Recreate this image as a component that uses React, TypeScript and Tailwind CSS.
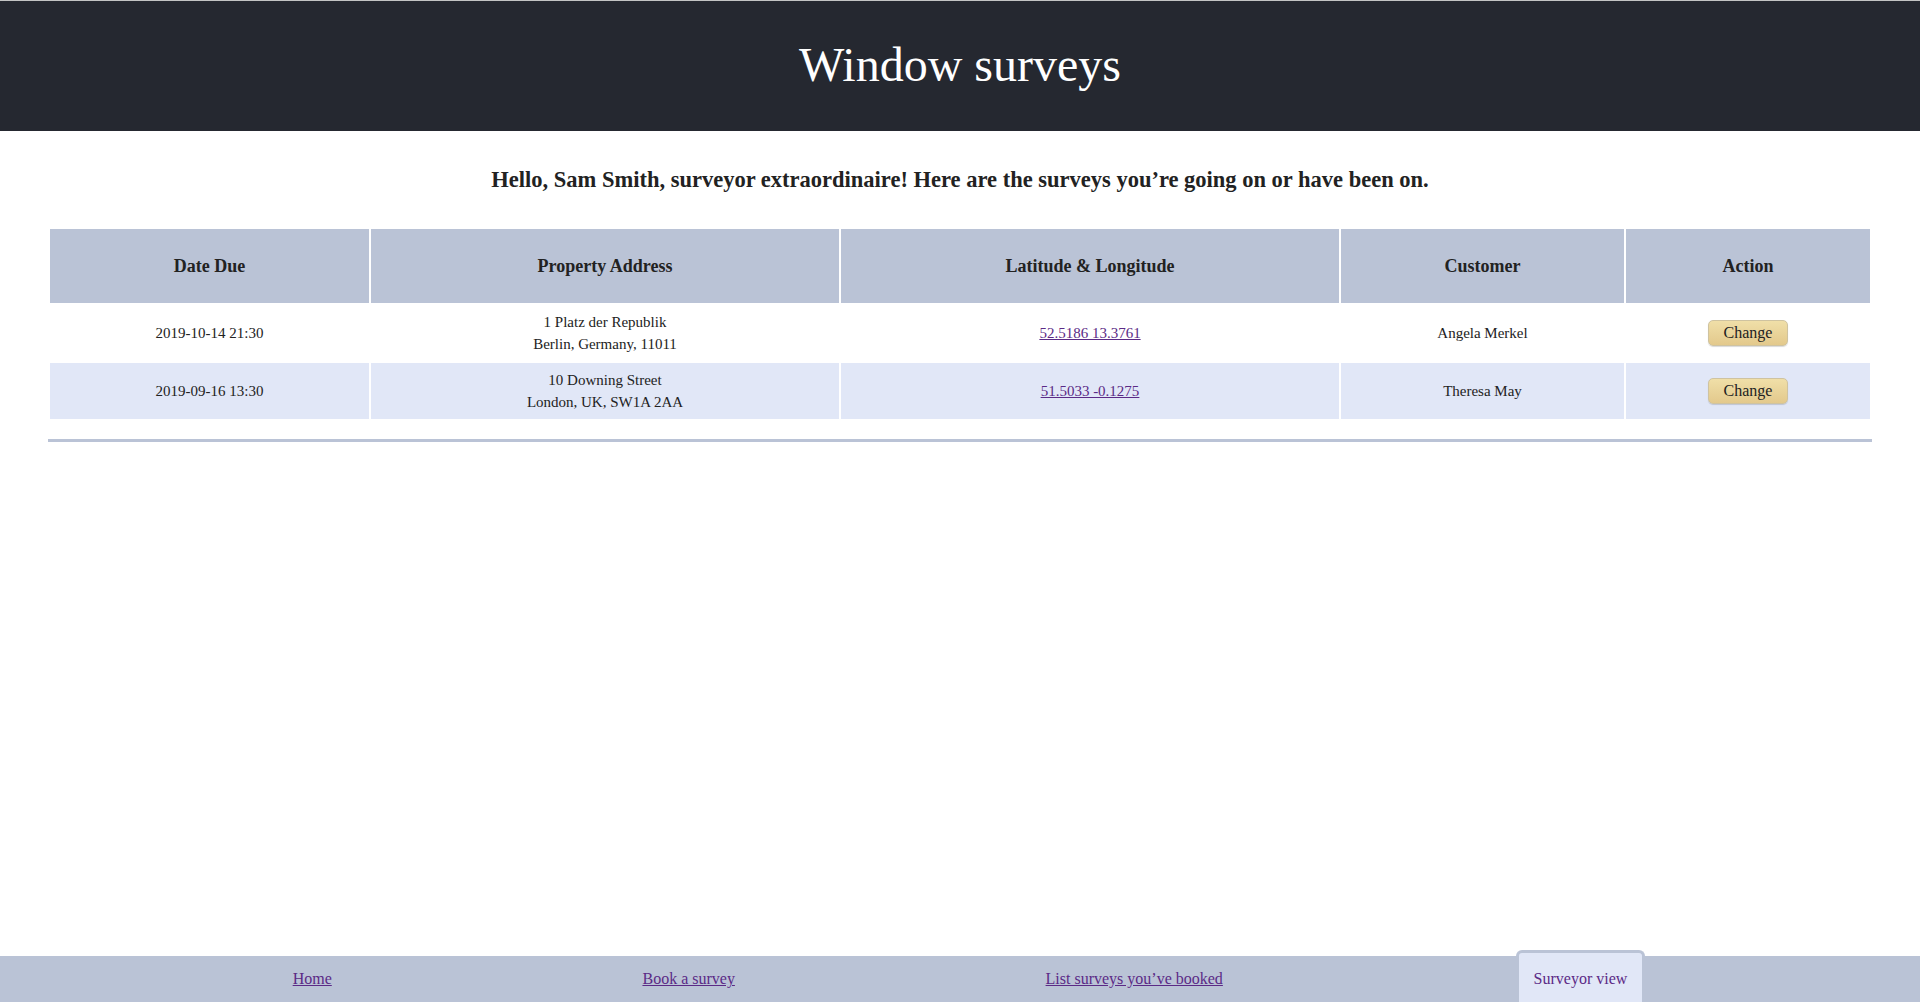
import React from "react";

const rows = [
  {
    date: "2019-10-14 21:30",
    addr1: "1 Platz der Republik",
    addr2: "Berlin, Germany, 11011",
    ll: "52.5186 13.3761",
    customer: "Angela Merkel",
    bg: "bg-white",
  },
  {
    date: "2019-09-16 13:30",
    addr1: "10 Downing Street",
    addr2: "London, UK, SW1A 2AA",
    ll: "51.5033 -0.1275",
    customer: "Theresa May",
    bg: "bg-[#e1e7f7]",
  },
];

export default function App() {
  return (
    <div
      className="min-h-screen flex flex-col bg-white text-[#222]"
      style={{ fontFamily: '"Liberation Serif", "DejaVu Serif", serif' }}
    >
      <header className="h-[131px] border-t border-[#c4c4c4] bg-[#252830] flex items-center justify-center">
        <h1 className="text-[48px] leading-none text-white -mt-[2px]">Window surveys</h1>
      </header>

      <h2 className="text-center font-bold text-[22.5px] leading-[30px] mt-[34px]">
        Hello, Sam Smith, surveyor extraordinaire! Here are the surveys you’re going on or have been on.
      </h2>

      <div className="mx-[48px] mt-[32px] pb-[18px] border-b-[3px] border-[#bac3d6]">
        <table className="w-full table-fixed border-separate border-spacing-[2px] text-center">
          <colgroup>
            <col className="w-[319px]" />
            <col className="w-[468px]" />
            <col className="w-[498px]" />
            <col className="w-[283px]" />
            <col />
          </colgroup>
          <thead>
            <tr className="h-[74px] bg-[#bac3d6]">
              <th className="font-bold text-[18px]">Date Due</th>
              <th className="font-bold text-[18px]">Property Address</th>
              <th className="font-bold text-[18px]">Latitude &amp; Longitude</th>
              <th className="font-bold text-[18px]">Customer</th>
              <th className="font-bold text-[18px]">Action</th>
            </tr>
          </thead>
          <tbody>
            {rows.map((r) => (
              <tr key={r.date} className={`h-[56px] ${r.bg}`}>
                <td className="text-[15px]">{r.date}</td>
                <td className="text-[15px] leading-[22px]">
                  {r.addr1}
                  <br />
                  {r.addr2}
                </td>
                <td className="text-[15px]">
                  <a href="#" className="text-[#5b2a86] underline">
                    {r.ll}
                  </a>
                </td>
                <td className="text-[15px]">{r.customer}</td>
                <td>
                  <button className="h-[26px] w-[80px] rounded-[5px] border border-[#cfc3a0] bg-gradient-to-b from-[#f0dfa8] to-[#e3c98c] text-[16px] text-[#222] shadow-[0_1px_1px_rgba(0,0,0,0.15)]">
                    Change
                  </button>
                </td>
              </tr>
            ))}
          </tbody>
        </table>
      </div>

      <footer className="mt-auto h-[46px] bg-[#bac3d6] flex items-stretch justify-evenly text-[16px]">
        <a href="#" className="px-[18px] flex items-center text-[#5b2a86] underline">
          Home
        </a>
        <a href="#" className="px-[18px] flex items-center text-[#5b2a86] underline">
          Book a survey
        </a>
        <a href="#" className="px-[18px] flex items-center text-[#5b2a86] underline">
          List surveys you’ve booked
        </a>
        <span className="-mt-[6px] px-[15px] flex items-center pt-[2px] bg-[#e1e7f7] text-[#5b2a86] border-[3px] border-b-0 border-[#bac3d6] rounded-t-[6px]">
          Surveyor view
        </span>
      </footer>
    </div>
  );
}
